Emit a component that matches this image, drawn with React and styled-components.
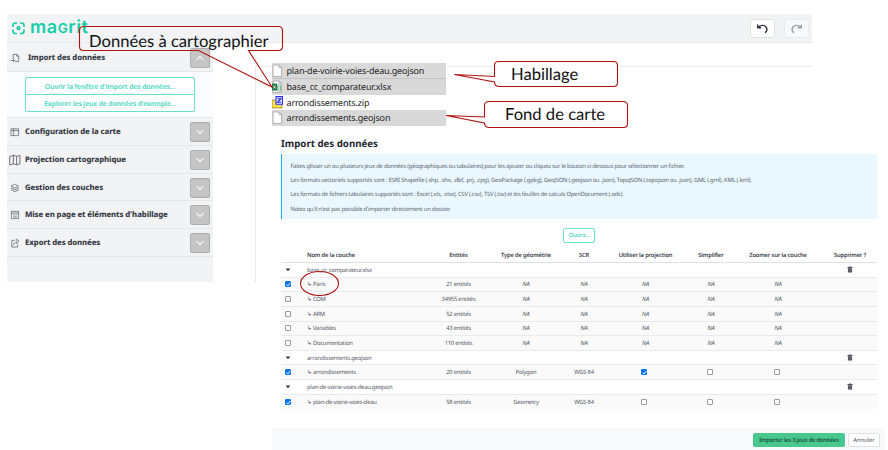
import React from 'react';
import styled, { createGlobalStyle } from 'styled-components';

const Global = createGlobalStyle`
  * { box-sizing: border-box; }
  html, body { margin: 0; padding: 0; background: #fff; }
  body { font-family: "Noto Sans", "Open Sans", sans-serif; color: #363c47; overflow: hidden; text-rendering: geometricPrecision; }
  button { font-family: inherit; margin: 0; padding: 0; cursor: pointer; text-rendering: inherit; }
`;

const Page = styled.div`
  position: relative;
  width: 888px;
  height: 450px;
  overflow: hidden;
  padding: 14px 0 0 7px;
  background: #fff;
`;

const AppWindow = styled.div`
  display: grid;
  grid-template: 29px 239px / 206px 1fr;
  width: 805px;
`;

const TopBar = styled.header`
  grid-column: 1 / -1;
  display: flex;
  align-items: center;
  justify-content: space-between;
  padding: 0 3px 0 5px;
  background: #f2f3f5;
  border-bottom: 1px solid #e9eaec;
`;

const Brand = styled.div`
  display: flex;
  align-items: center;
  gap: 5px;
`;

const BrandName = styled.span`
  padding-top: 1px;
  font: 600 18px/18px Inter, sans-serif;
  color: #16cda8;
  letter-spacing: 0.55px;
  white-space: nowrap;
`;

const SmallCap = styled.span`
  font-size: 13.5px;
`;

const History = styled.div`
  display: flex;
  gap: 9px;
`;

const HistoryButton = styled.button`
  display: grid;
  place-items: center;
  width: 25px;
  height: 19px;
  border: 1px solid ${(p) => (p.disabled ? '#e9ebee' : '#dfe1e5')};
  border-radius: 3px;
  background: ${(p) => (p.disabled ? '#f8f9fa' : '#fff')};
  color: ${(p) => (p.disabled ? '#9a9da3' : '#2f3440')};
`;

const Sidebar = styled.aside`
  background: #f2f3f5;
`;

const SectionHead = styled.div`
  display: grid;
  grid-template-columns: ${(p) => (p.$open ? '21px' : '18px')} 1fr 20px;
  align-items: center;
  height: ${(p) => (p.$open ? '29px' : '27.75px')};
  padding: 1.5px 3px 0 0;
  border-bottom: 1px solid #e4e6e8;
`;

const SectionIcon = styled.span`
  display: grid;
  place-items: center;
  width: 16px;
  color: #5a606b;
`;

const SectionTitle = styled.span`
  font-size: 7.75px;
  font-weight: 800;
  line-height: 12px;
  letter-spacing: -0.09px;
  color: #363c47;
  white-space: nowrap;
`;

const Toggle = styled.button`
  display: grid;
  place-items: center;
  width: 20px;
  height: 20px;
  border: 1px solid #adadad;
  border-radius: 2px;
  background: #c5c5c5;
  color: #f5f5f5;
`;

const SectionBody = styled.div`
  display: flex;
  flex-direction: column;
  height: 46px;
  padding: 5px 18px 5px;
  background: #fafcff;
  border-bottom: 1px solid #e4e6e8;
`;

const StackButton = styled.button`
  flex: 1;
  padding-top: 2px;
  border: 1px solid #68e0cc;
  border-radius: ${(p) => (p.$last ? '0 0 2px 2px' : '2px 2px 0 0')};
  border-top-width: ${(p) => (p.$last ? 0 : 1)}px;
  background: #fff;
  color: #45d6bd;
  font-size: 6.8px;
  font-weight: 600;
  line-height: 10px;
  letter-spacing: -0.1px;
  white-space: nowrap;
`;

const MapArea = styled.main`
  margin: 23px 0 0 42px;
  border: solid #ececee;
  border-width: 1px 0 0 1px;
`;

const Dialog = styled.section`
  position: absolute;
  left: 272px;
  top: 130px;
  width: 613px;
  height: 320px;
  display: flex;
  flex-direction: column;
  background: #fff;
`;

const DialogBody = styled.div`
  flex: 1;
  padding: 7px 8px 0 9px;
`;

const DialogTitle = styled.h1`
  margin: 0 0 3px;
  font-size: 9.7px;
  font-weight: 700;
  line-height: 14px;
  color: #22262e;
`;

const Notice = styled.div`
  display: flex;
  flex-direction: column;
  height: 65px;
  padding: 5px 0 0 8.5px;
  border-left: 1.5px solid #00b0f8;
  background: #eaf7fe;
`;

const NoticeLine = styled.p`
  margin: 0;
  height: 14.2px;
  font-size: 5.8px;
  line-height: 14.2px;
  letter-spacing: -0.212px;
  color: #59636e;
  white-space: nowrap;
`;

const OpenRow = styled.div`
  display: flex;
  justify-content: center;
  padding: 8.5px 0 5px;
`;

const OpenButton = styled.button`
  width: 32px;
  height: 15px;
  border: 1px solid #6fe3d0;
  border-radius: 2px;
  background: #fff;
  color: #35cfb5;
  font-size: 5.8px;
  font-weight: 500;
  line-height: 10px;
  letter-spacing: -0.1px;
`;

const Row = styled.div`
  display: grid;
  grid-template-columns: 26px 124px 55px 80px 36px 87px 44px 90px 54px;
  align-items: center;
  height: ${(p) => (p.$head ? 15.5 : 14.63)}px;
  border-bottom: ${(p) => (p.$last ? 0 : 1)}px solid ${(p) => (p.$head ? '#dfe1e8' : '#e9eaec')};
  background: ${(p) => (p.$child ? '#fafafa' : '#fff')};
  font-size: 5.8px;
  line-height: 12px;
  font-weight: ${(p) => (p.$head ? 600 : 400)};
  letter-spacing: ${(p) => (p.$head ? -0.16 : -0.21)}px;
  color: ${(p) => (p.$head ? '#3a404a' : '#50565f')};
`;

const Cell = styled.span`
  display: flex;
  justify-content: ${(p) => (p.$start ? 'flex-start' : 'center')};
  padding-left: ${(p) => p.$pad || 0}px;
  padding-right: ${(p) => p.$shift || 0}px;
  font-style: ${(p) => (p.$na ? 'italic' : 'normal')};
  white-space: nowrap;
`;

const Box = styled.span`
  display: grid;
  place-items: center;
  width: 6px;
  height: 6px;
  border: 1px solid ${(p) => (p.$on ? '#0a74f0' : '#9b9b9b')};
  border-radius: 1px;
  background: ${(p) => (p.$on ? '#0a74f0' : '#fff')};
`;

const DialogFooter = styled.footer`
  display: flex;
  align-items: center;
  justify-content: flex-end;
  gap: 3px;
  height: 22px;
  padding: 2px 5px 0 0;
  background: #f8f9fb;
`;

const FooterButton = styled.button`
  width: ${(p) => (p.$primary ? 92 : 32)}px;
  height: 14px;
  border: 1px solid ${(p) => (p.$primary ? '#48c78e' : '#dfe1e5')};
  border-radius: 2px;
  background: ${(p) => (p.$primary ? '#48c78e' : '#fff')};
  color: ${(p) => (p.$primary ? '#1d5a40' : '#4a505b')};
  font-size: 5.8px;
  font-weight: ${(p) => (p.$primary ? 600 : 400)};
  line-height: 10px;
  letter-spacing: ${(p) => (p.$primary ? -0.27 : -0.05)}px;
  white-space: nowrap;
`;

const FileList = styled.ul`
  position: absolute;
  left: 272px;
  top: 63px;
  width: 174px;
  margin: 0;
  padding: 0;
  list-style: none;
  background: #fff;
`;

const FileItem = styled.li`
  display: flex;
  align-items: center;
  gap: 3.5px;
  height: 15.8px;
  padding-top: 1px;
  background: ${(p) => (p.$selected ? '#d9d9d9' : '#fff')};
  border-bottom: 1px solid ${(p) => (p.$rule ? '#c4c4c4' : 'transparent')};
  font: 9px/14px "Noto Sans", sans-serif;
  letter-spacing: -0.165px;
  color: #1c1c1c;
  white-space: nowrap;
`;

const Overlay = styled.svg`
  position: absolute;
  inset: 0;
  pointer-events: none;
`;

const CalloutText = styled.span`
  position: absolute;
  left: ${(p) => p.$x}px;
  top: ${(p) => p.$y}px;
  font: 16.6px/20px Lato, "Noto Sans", sans-serif;
  color: #111;
  white-space: nowrap;
`;

const stroke = { fill: 'none', stroke: 'currentColor', strokeLinecap: 'round', strokeLinejoin: 'round' };

const LogoMark = () => (
  <svg width="13" height="14" viewBox="0 0 13 14" fill="none" stroke="#16cda8" strokeWidth="1.7">
    <path d="M1 6V4.500Q1 2 3.500 2H5M8 2h1.500Q12 2 12 4.500V6M12 8.500v1.500Q12 12.500 9.500 12.500H8M5 12.500H3.500Q1 12.500 1 10V8.500" />
    <circle cx="6.500" cy="7.200" r="1.300" />
  </svg>
);

const UndoIcon = ({ flip }) => (
  <svg width="13" height="13" viewBox="0 0 13 13" {...stroke} strokeWidth="1.4" transform={flip ? 'scale(-1 1)' : undefined}>
    <path d="M1.700 3v2.800h3M2.200 5.500C4 3 8 2.500 10 5c1.200 1.700 1 4-.5 5.500" />
  </svg>
);

const Chevron = ({ up }) => (
  <svg width="10" height="8" viewBox="0 0 10 8" {...stroke} strokeWidth="1.2">
    <path d={up ? 'M1.800 5.700 5 2.500l3.200 3.200' : 'M1.800 2.300 5 5.500l3.200-3.200'} />
  </svg>
);

const icons = {
  import: <path d="M3.500 6V1.500h4l2 2V9.500H6M7.500 1.500v2h2M1 8.200h4M3.500 6.700 5 8.200 3.500 9.700" />,
  config: <path d="M1.500 2h8v7.500h-8zM1.500 4h8M4 2v7.500" />,
  map: <path d="M1 2.200 4 1.200l3 1 3-1v7.800l-3 1-3-1-3 1zM4 1.500v7.500M7 2.200v7.500" />,
  layers: <path d="M5.500 1.500 9.500 3.500l-4 2-4-2zM1.500 5.500l4 2 4-2M1.500 7.500l4 2 4-2" />,
  layout: <path d="M2 1.500h7.500v8H2zM2 3.300h7.500M3.800 5.300h1.200M6.500 5.300h1M3.800 7.600h3.800" />,
  export: <path d="M5 2.500H2v7.500h6.500V7.500M4 7.500C4.500 5.500 5.500 4.500 7.200 4.500V6L10 3.500 7.200 1.300v1.400" />,
};

const Glyph = ({ name }) => (
  <svg width={name === 'map' ? 12 : 10} height={name === 'map' ? 12 : 10} viewBox="0 0 11 11" {...stroke} strokeWidth="0.8">
    {icons[name]}
  </svg>
);

const Check = ({ on }) => (
  <Box $on={on}>
    {on && (
      <svg width="5" height="5" viewBox="0 0 5 5" fill="none" stroke="#fff" strokeWidth="1">
        <path d="M.6 2.600 2 3.900 4.400 1" />
      </svg>
    )}
  </Box>
);

const Trash = () => (
  <svg width="6" height="7" viewBox="0 0 6 7">
    <path d="M.5 1h1.500V.4h2V1h1.500v.9h-5zM.9 2.200h4.200v4.400H.9z" fill="#4a4f58" />
    <path d="M2.200 3v2.800M3.800 3v2.800" stroke="#9a9ea5" strokeWidth=".4" />
  </svg>
);

const Caret = () => (
  <svg width="6" height="4" viewBox="0 0 6 4">
    <path d="M.6.500h4.800L3 3.200z" fill="#2f3440" />
  </svg>
);

const FileIcon = ({ kind }) => (
  <svg width="11" height="14" viewBox="0 0 11 14">
    {kind === 'zip' ? (
      <>
        <path d="M0 4h3l1 1h6v7H0z" fill="#f5e04a" stroke="#8d7c1c" strokeWidth=".7" />
        <path d="M4 .6h6.500v7.600H4z" fill="#e8ebff" stroke="#2a2cf0" strokeWidth="1.100" />
        <path d="M5.500 2.700h3.400L5.500 6.300h3.600" fill="none" stroke="#2a2cf0" strokeWidth="1.100" />
      </>
    ) : (
      <>
        <path d="M1 1h6l2.500 2.500v9H1z" fill="#fdfdfd" stroke="#9c9c9c" strokeWidth=".7" />
        <path d="M7 1V3.500h2.500" fill="none" stroke="#9c9c9c" strokeWidth=".7" />
      </>
    )}
    {kind === 'xlsx' && (
      <>
        <path d="M5.500 5h3v6h-3zM5.500 7h3M5.500 9h3" fill="none" stroke="#6fae88" strokeWidth=".8" />
        <path d="M0 3.500h5v7H0z" fill="#1f7a46" />
        <path d="M1.500 5.500l2 3M3.500 5.500l-2 3" stroke="#fff" strokeWidth=".8" />
      </>
    )}
  </svg>
);

const sections = [
  ['config', 'Configuration de la carte'],
  ['map', 'Projection cartographique'],
  ['layers', 'Gestion des couches'],
  ['layout', "Mise en page et éléments d'habillage"],
  ['export', 'Export des données'],
];

const notices = [
  'Faites glisser un ou plusieurs jeux de données (géographiques ou tabulaires) pour les ajouter ou cliquez sur le bouton ci-dessous pour sélectionner un fichier.',
  'Les formats vectoriels supportés sont : ESRI Shapefile (.shp, .shx, .dbf, .prj, .cpg), GeoPackage (.gpkg), GeoJSON (.geojson ou .json), TopoJSON (.topojson ou .json), GML (.gml), KML (.kml).',
  'Les formats de fichiers tabulaires supportés sont : Excel (.xls, .xlsx), CSV (.csv), TSV (.tsv) et les feuilles de calculs OpenDocument (.ods).',
  "Notez qu'il n'est pas possible d'importer directement un dossier.",
];

const headings = ['Nom de la couche', 'Entités', 'Type de géométrie', 'SCR', 'Utiliser la projection', 'Simplifier', 'Zoomer sur la couche', 'Supprimer ?'];

const rows = [
  { file: 'base_cc_comparateur.xlsx' },
  { name: 'Paris', count: '21 entités', on: true },
  { name: 'COM', count: '34955 entités' },
  { name: 'ARM', count: '52 entités' },
  { name: 'Variables', count: '43 entités' },
  { name: 'Documentation', count: '110 entités' },
  { file: 'arrondissements.geojson' },
  { name: 'arrondissements', count: '20 entités', on: true, type: 'Polygon', crs: 'WGS 84', projection: true },
  { file: 'plan-de-voirie-voies-deau.geojson' },
  { name: 'plan-de-voirie-voies-deau', count: '58 entités', on: true, type: 'Geometry', crs: 'WGS 84' },
];

const files = [
  { name: 'plan-de-voirie-voies-deau.geojson', selected: true, rule: true },
  { name: 'base_cc_comparateur.xlsx', selected: true, kind: 'xlsx' },
  { name: 'arrondissements.zip', kind: 'zip' },
  { name: 'arrondissements.geojson', selected: true },
];

const FileRow = ({ row }) => (
  <Row>
    <Cell $start $pad={3.5}><Caret /></Cell>
    <Cell $start>{row.file}</Cell>
    <Cell /><Cell /><Cell /><Cell /><Cell /><Cell />
    <Cell><Trash /></Cell>
  </Row>
);

const LayerRow = ({ row, last }) => (
  <Row $child $last={last}>
    <Cell $start $pad={3.5}><Check on={row.on} /></Cell>
    <Cell $start>↳ {row.name}</Cell>
    <Cell>{row.count}</Cell>
    <Cell $na={!row.type}>{row.type || 'NA'}</Cell>
    <Cell $na={!row.crs}>{row.crs || 'NA'}</Cell>
    {row.type ? (
      <>
        <Cell $shift={3}><Check on={row.projection} /></Cell>
        <Cell $shift={3}><Check /></Cell>
        <Cell $shift={3}><Check /></Cell>
      </>
    ) : (
      <>
        <Cell $na>NA</Cell>
        <Cell $na>NA</Cell>
        <Cell $na>NA</Cell>
      </>
    )}
    <Cell />
  </Row>
);

export default function App() {
  return (
    <Page>
      <Global />
      <AppWindow>
        <TopBar>
          <Brand>
            <LogoMark />
            <BrandName>ma<SmallCap>G</SmallCap>rit</BrandName>
          </Brand>
          <History>
            <HistoryButton><UndoIcon /></HistoryButton>
            <HistoryButton disabled><UndoIcon flip /></HistoryButton>
          </History>
        </TopBar>
        <Sidebar>
          <SectionHead $open>
            <SectionIcon><Glyph name="import" /></SectionIcon>
            <SectionTitle>Import des données</SectionTitle>
            <Toggle><Chevron up /></Toggle>
          </SectionHead>
          <SectionBody>
            <StackButton>Ouvrir la fenêtre d'import des données...</StackButton>
            <StackButton $last>Explorer les jeux de données d'exemple...</StackButton>
          </SectionBody>
          {sections.map(([icon, label]) => (
            <SectionHead key={icon}>
              <SectionIcon><Glyph name={icon} /></SectionIcon>
              <SectionTitle>{label}</SectionTitle>
              <Toggle><Chevron /></Toggle>
            </SectionHead>
          ))}
        </Sidebar>
        <MapArea />
      </AppWindow>

      <Dialog>
        <DialogBody>
          <DialogTitle>Import des données</DialogTitle>
          <Notice>
            {notices.map((line) => <NoticeLine key={line}>{line}</NoticeLine>)}
          </Notice>
          <OpenRow><OpenButton>Ouvrir...</OpenButton></OpenRow>
          <Row $head>
            <Cell />
            {headings.map((h, i) => <Cell key={h} $start={i === 0}>{h}</Cell>)}
          </Row>
          {rows.map((row, i) => row.file
            ? <FileRow key={row.file} row={row} />
            : <LayerRow key={row.name} row={row} last={i === rows.length - 1} />)}
        </DialogBody>
        <DialogFooter>
          <FooterButton $primary>Importer les 3 jeux de données</FooterButton>
          <FooterButton>Annuler</FooterButton>
        </DialogFooter>
      </Dialog>

      <FileList>
        {files.map((f) => (
          <FileItem key={f.name} $selected={f.selected} $rule={f.rule}>
            <FileIcon kind={f.kind} />
            {f.name}
          </FileItem>
        ))}
      </FileList>

      <Overlay width="888" height="450" fill="none" stroke="#b01212" strokeWidth="1.1">
        <path d="M83.500 26.500H278.500Q282.500 26.500 282.500 30.500V46.500Q282.500 50.500 278.500 50.500H248.500L272 87 198.500 50.500H83.500Q79.500 50.500 79.500 46.500V30.500Q79.500 26.500 83.500 26.500Z" />
        <path fill="#fff" d="M498.500 61.500H613.500Q617.500 61.500 617.500 65.500V82.500Q617.500 86.500 613.500 86.500H498.500Q494.500 86 494.500 82L454.500 74.500 494.500 76.500V65.500Q494.500 61.500 498.500 61.500Z" />
        <path fill="#fff" d="M488.500 101.500H623.500Q627.500 101.500 627.500 105.500V123.500Q627.500 127.500 623.500 127.500H488.500Q484.500 127 484.500 123L446 115.500 484.500 117V105.500Q484.500 101.500 488.500 101.500Z" />
        <ellipse cx="319.500" cy="283.500" rx="19" ry="12" />
      </Overlay>
      <CalloutText $x={89} $y={31}>Données à cartographier</CalloutText>
      <CalloutText $x={511} $y={64}>Habillage</CalloutText>
      <CalloutText $x={505} $y={104}>Fond de carte</CalloutText>
    </Page>
  );
}
